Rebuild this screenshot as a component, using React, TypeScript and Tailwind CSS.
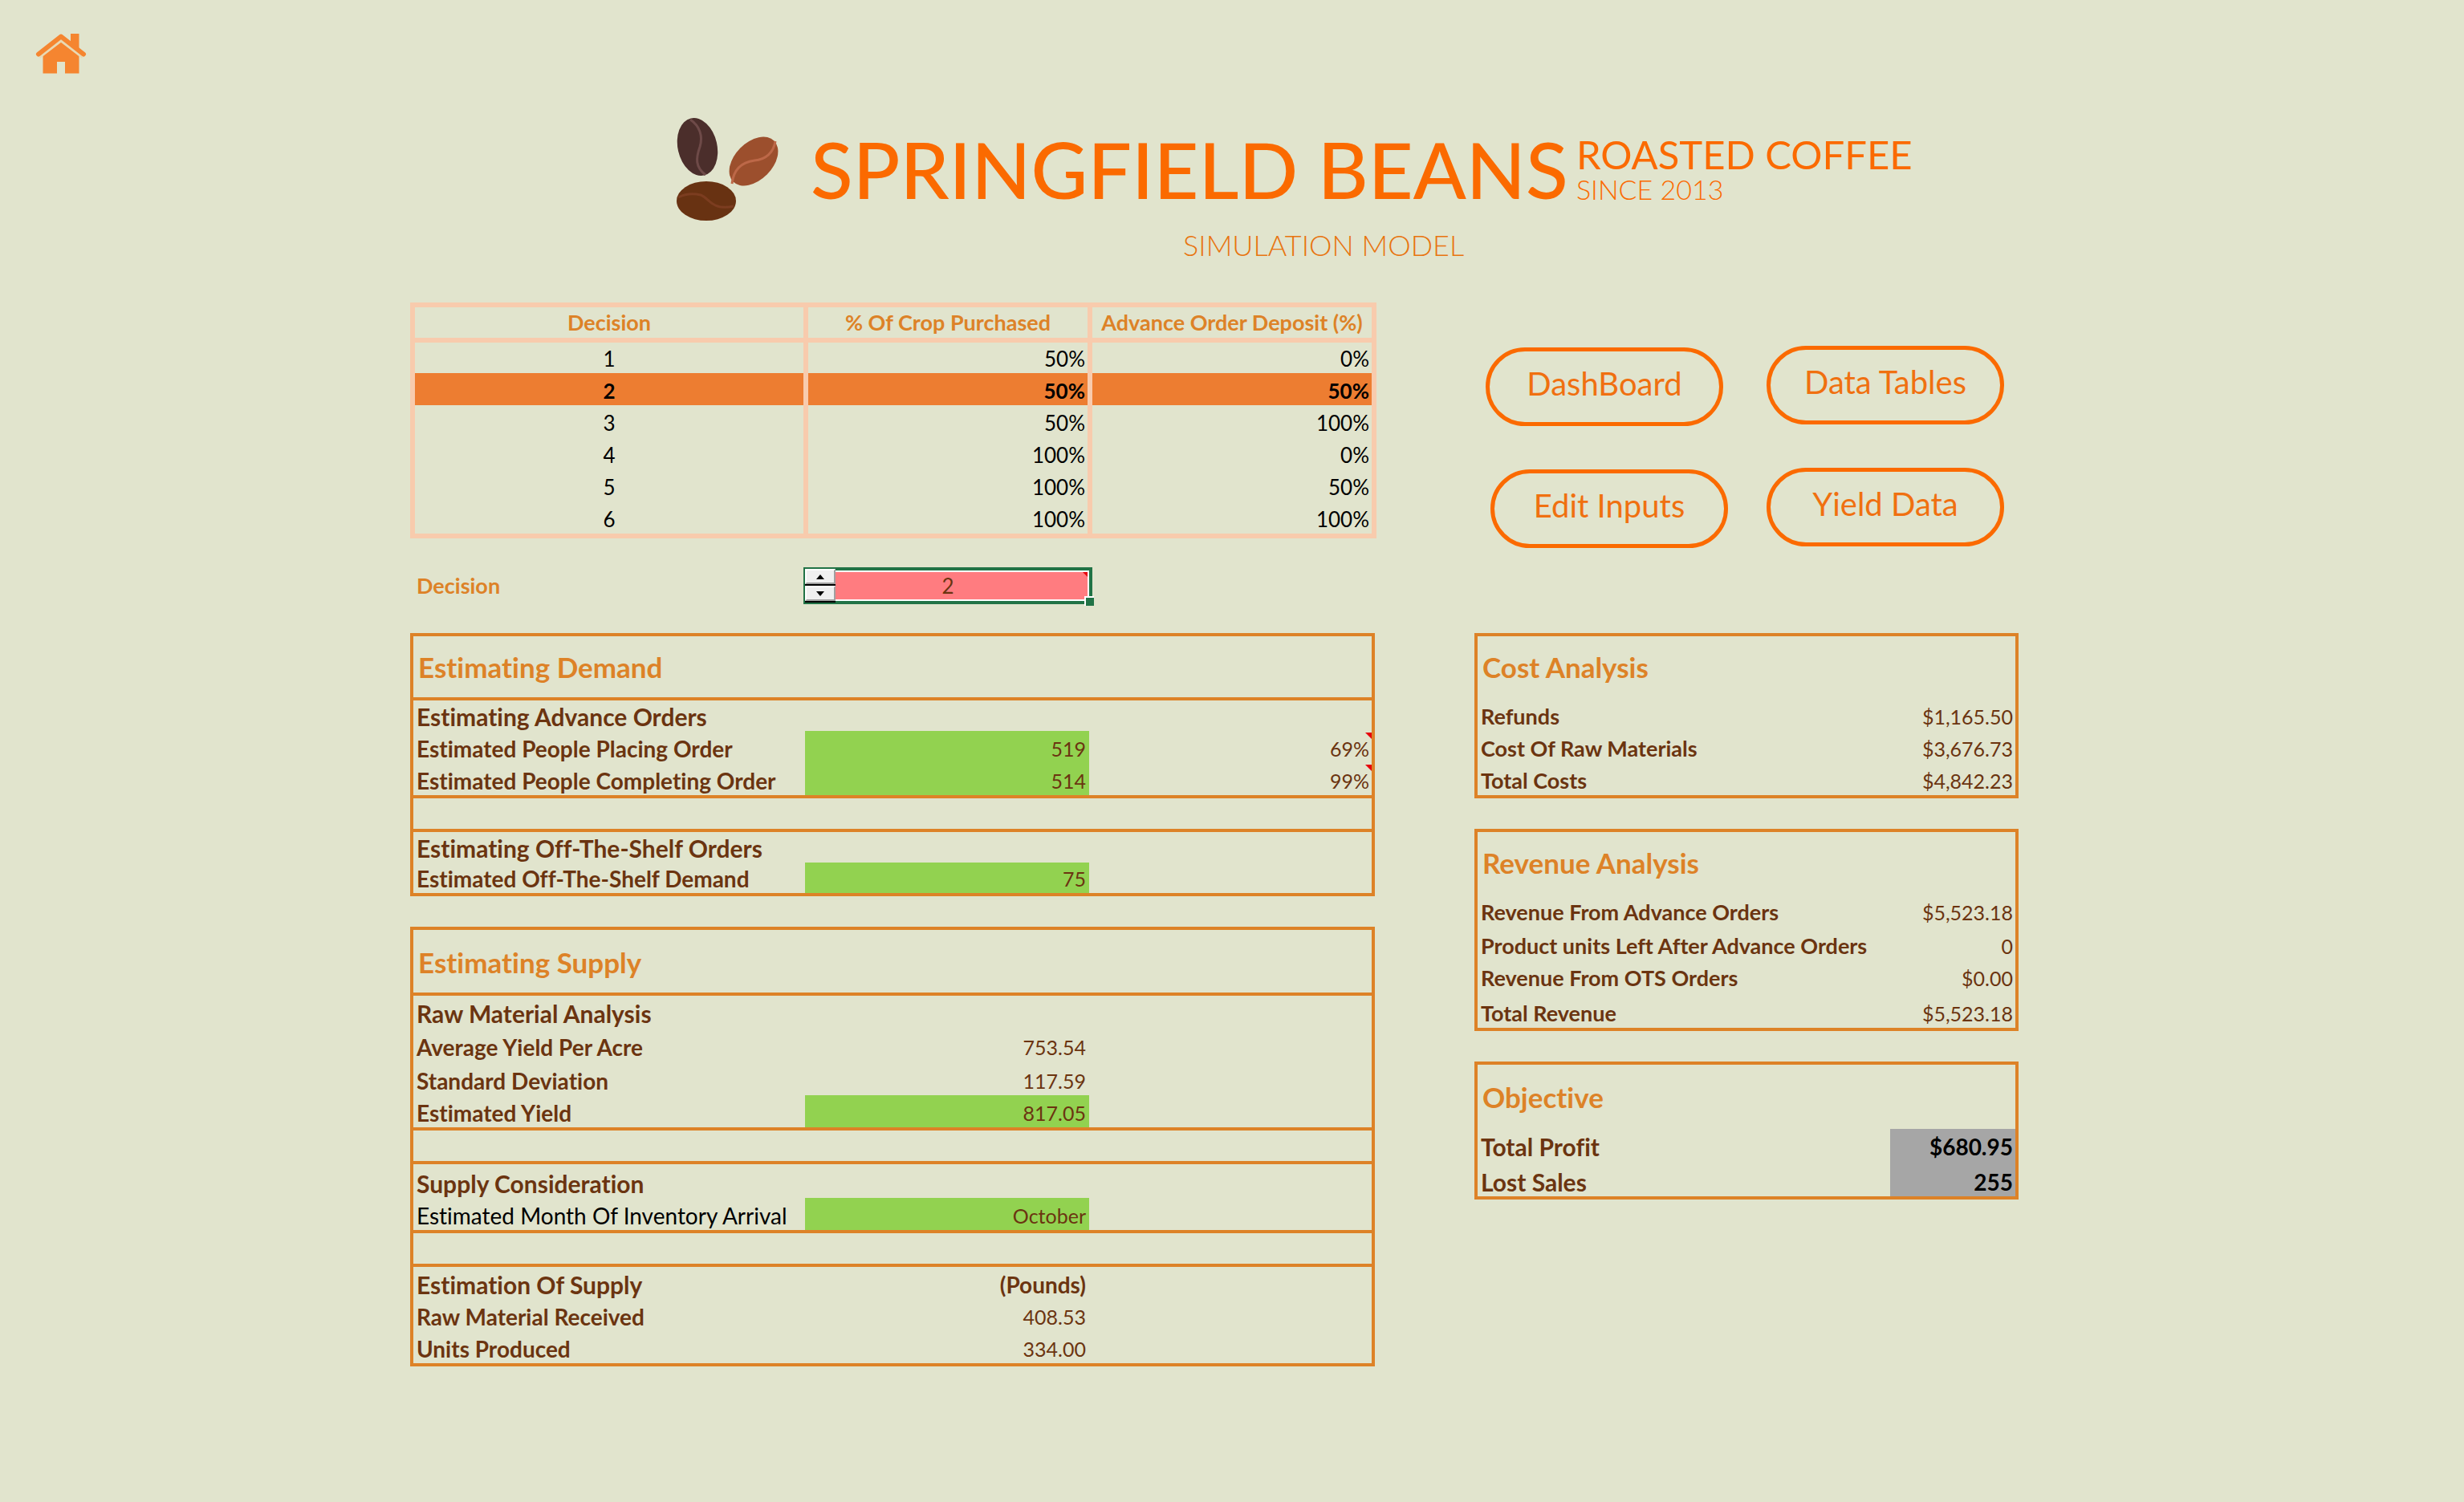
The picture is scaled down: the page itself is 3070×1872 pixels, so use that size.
import { useState } from "react";
import type { ReactNode } from "react";

const decisions = [
  { id: 1, crop: "50%", deposit: "0%" },
  { id: 2, crop: "50%", deposit: "50%" },
  { id: 3, crop: "50%", deposit: "100%" },
  { id: 4, crop: "100%", deposit: "0%" },
  { id: 5, crop: "100%", deposit: "50%" },
  { id: 6, crop: "100%", deposit: "100%" },
];

function HomeIcon() {
  return (
    <svg viewBox="44 41 64 52" className="h-[52px] w-[64px]" aria-hidden="true">
      <g fill="#f58530">
        <path d="M88 42h10.500v24l-10.500-8z" />
        <path d="M76 50.500 98.500 69v22.500H81V77H71v14.500H53.500V69z" />
      </g>
      <path d="M48 70 76 48.500 104 70" fill="none" stroke="#e8d9b4" strokeWidth="7" />
      <path d="M48 67.500 76 45.500 104 67.500" fill="none" stroke="#f58530" strokeWidth="6" strokeLinecap="round" strokeLinejoin="round" />
    </svg>
  );
}

function BeansLogo() {
  return (
    <svg viewBox="840 145 132 132" className="h-[132px] w-[132px] shrink-0" aria-hidden="true">
      <ellipse cx="869" cy="183" rx="24.500" ry="36.500" transform="rotate(-13 869 183)" fill="#4b2e2b" />
      <path d="M860 149C872 157 876 170 872 183C867 197 866 208 879 218" fill="none" stroke="#6e4a48" strokeWidth="3" />
      <ellipse cx="939" cy="201" rx="23.500" ry="36" transform="rotate(45 939 201)" fill="#9c4f2d" />
      <path d="M966 176C964 190 954 199 940 200C925 202 914 210 912 229" fill="none" stroke="#bd6848" strokeWidth="3" />
      <ellipse cx="880" cy="250.500" rx="37" ry="24.500" fill="#683212" />
      <path d="M845 246C853 242 864 241 873 243C884 247 887 263 914 257" fill="none" stroke="#7c3d20" strokeWidth="3" />
    </svg>
  );
}

function NavButton({ children, className }: { children: ReactNode; className: string }) {
  return (
    <button
      type="button"
      className={`h-[98px] w-[296px] rounded-full border-[5px] border-[#fb6a00] pb-2 text-[40px] leading-[48px] text-[#f07010] ${className}`}
    >
      {children}
    </button>
  );
}

type Row = {
  h: string;
  label?: string;
  kind?: "title" | "heading" | "plain" | "strong" | "item";
  value?: string;
  fill?: boolean;
  boldValue?: boolean;
  extra?: string;
  line?: boolean;
};

const kinds = {
  title: "text-[35px] leading-[40px] font-bold text-[#dd8227] pb-[18px] pl-[6px]",
  heading: "text-[30px] leading-[32px] font-bold text-[#6b3410] pb-[2px] pl-[4px]",
  strong: "text-[28px] leading-[32px] font-bold text-[#6b3410] pb-[2px] pl-[4px]",
  item: "text-[27px] leading-[32px] font-bold text-[#6b3410] pb-[2px] pl-[4px]",
  plain: "text-[28px] leading-[32px] text-black pb-[2px] pl-[4px]",
};

function Note() {
  return <span className="absolute top-[2px] right-0 h-2 w-2 bg-red-600 [clip-path:polygon(0_0,100%_0,100%_100%)]" />;
}

function EstimatePanel({ rows }: { rows: Row[] }) {
  return (
    <table className="w-full table-fixed border-separate border-spacing-0 border-4 border-[#dd8227]">
      <colgroup>
        <col />
        <col className="w-[354px]" />
        <col className="w-[352px]" />
      </colgroup>
      <tbody>
        {rows.map((r, i) => {
          const line = r.line ? "border-b-4 border-[#dd8227]" : "";
          return (
            <tr key={i} className={r.h}>
              <th scope="row" className={`p-0 text-left align-bottom whitespace-nowrap ${line} ${kinds[r.kind ?? "strong"]} ${r.kind === "plain" ? "font-normal" : ""}`}>
                {r.label}
              </th>
              <td
                className={`p-0 pr-[4px] pb-[2px] text-right align-bottom leading-[32px] text-[#6b3410] ${line} ${r.fill ? "bg-[#92d250] bg-clip-padding" : ""} ${r.boldValue ? "text-[28px] font-bold" : "text-[25px]"}`}
              >
                {r.value}
              </td>
              <td className={`relative p-0 pr-[3px] pb-[2px] text-right align-bottom text-[25px] leading-[32px] text-[#6b3410] ${line}`}>
                {r.extra}
                {r.extra && <Note />}
              </td>
            </tr>
          );
        })}
      </tbody>
    </table>
  );
}

function SummaryPanel({ title, titleHeight, rows, highlight }: { title: string; titleHeight: string; rows: Row[]; highlight?: boolean }) {
  return (
    <table className="w-full table-fixed border-separate border-spacing-0 border-4 border-[#dd8227]">
      <colgroup>
        <col />
        <col className="w-[156px]" />
      </colgroup>
      <thead>
        <tr className={titleHeight}>
          <th colSpan={2} className="pb-[20px] pl-[6px] text-left align-bottom text-[35px] leading-[40px] font-bold text-[#dd8227]">
            {title}
          </th>
        </tr>
      </thead>
      <tbody>
        {rows.map((r) => (
          <tr key={r.label} className={r.h}>
            <th scope="row" className={`text-left align-bottom whitespace-nowrap ${kinds[r.kind ?? "item"]}`}>
              {r.label}
            </th>
            <td
              className={`pr-[3px] pb-[2px] text-right align-bottom leading-[32px] ${highlight ? "bg-[#a6a6a6] text-[28px] font-bold text-black" : "text-[25px] text-[#6b3410]"}`}
            >
              {r.value}
            </td>
          </tr>
        ))}
      </tbody>
    </table>
  );
}

const demand: Row[] = [
  { h: "h-[80px]", label: "Estimating Demand", kind: "title", line: true },
  { h: "h-[38px]", label: "Estimating Advance Orders", kind: "heading" },
  { h: "h-[40px]", label: "Estimated People Placing Order", value: "519", fill: true, extra: "69%" },
  { h: "h-[44px]", label: "Estimated People Completing Order", value: "514", fill: true, extra: "99%", line: true },
  { h: "h-[42px]", line: true },
  { h: "h-[38px]", label: "Estimating Off-The-Shelf Orders", kind: "heading" },
  { h: "h-[38px]", label: "Estimated Off-The-Shelf Demand", value: "75", fill: true },
];

const supply: Row[] = [
  { h: "h-[82px]", label: "Estimating Supply", kind: "title", line: true },
  { h: "h-[40px]", label: "Raw Material Analysis", kind: "heading" },
  { h: "h-[42px]", label: "Average Yield Per Acre", value: "753.54" },
  { h: "h-[42px]", label: "Standard Deviation", value: "117.59" },
  { h: "h-[44px]", label: "Estimated Yield", value: "817.05", fill: true, line: true },
  { h: "h-[42px]", line: true },
  { h: "h-[42px]", label: "Supply Consideration", kind: "heading" },
  { h: "h-[44px]", label: "Estimated Month Of Inventory Arrival", kind: "plain", value: "October", fill: true, line: true },
  { h: "h-[42px]", line: true },
  { h: "h-[40px]", label: "Estimation Of Supply", kind: "heading", value: "(Pounds)", boldValue: true },
  { h: "h-[40px]", label: "Raw Material Received", value: "408.53" },
  { h: "h-[40px]", label: "Units Produced", value: "334.00" },
];

const costs: Row[] = [
  { h: "h-[40px]", label: "Refunds", value: "$1,165.50" },
  { h: "h-[40px]", label: "Cost Of Raw Materials", value: "$3,676.73" },
  { h: "h-[40px]", label: "Total Costs", value: "$4,842.23" },
];

const revenue: Row[] = [
  { h: "h-[40px]", label: "Revenue From Advance Orders", value: "$5,523.18" },
  { h: "h-[42px]", label: "Product units Left After Advance Orders", value: "0" },
  { h: "h-[40px]", label: "Revenue From OTS Orders", value: "$0.00" },
  { h: "h-[44px]", label: "Total Revenue", value: "$5,523.18" },
];

const objective: Row[] = [
  { h: "h-[40px]", label: "Total Profit", kind: "heading", value: "$680.95" },
  { h: "h-[44px]", label: "Lost Sales", kind: "heading", value: "255" },
];

const spin =
  "flex h-[21px] w-[38px] items-center justify-center border-2 border-t-white border-l-white border-r-[#a0a0a0] border-b-[#a0a0a0] bg-[#f0f0f0]";

export default function App() {
  const [selected, setSelected] = useState(2);
  const step = (d: number) => setSelected((s) => Math.min(6, Math.max(1, s + d)));

  return (
    <div className="min-h-screen bg-[#e1e4cd] pb-16 font-[Lato,Carlito,sans-serif] [font-variant-ligatures:none]">
      <nav className="pt-[41px] pl-[44px]">
        <a href="#home" aria-label="Home" className="inline-block align-top">
          <HomeIcon />
        </a>
      </nav>

      <header className="pt-[52px] text-[#fb6a00]">
        <div className="grid grid-cols-[840fr_2230fr]">
          <div className="col-start-2 flex items-start whitespace-nowrap">
            <BeansLogo />
            <h1 className="mt-[6px] ml-[38px] text-[97px] leading-[120px] font-medium">SPRINGFIELD BEANS</h1>
            <div className="mt-[22px] ml-[10px]">
              <p className="text-[49px] leading-[50px]">ROASTED COFFEE</p>
              <p className="text-[34px] leading-[38px] font-light">SINCE 2013</p>
            </div>
          </div>
        </div>
        <div className="mt-[8px] grid grid-cols-[1474fr_1596fr]">
          <p className="col-start-2 text-[36px] leading-[40px] font-light whitespace-nowrap text-[#e8740f]">SIMULATION MODEL</p>
        </div>
      </header>

      <main className="mt-[52px] grid grid-cols-[511fr_1204fr_122fr_678fr_555fr] gap-y-[36px]">
        <section className="col-start-2">
          <table className="w-full table-fixed border-separate border-spacing-0 border-[6px] border-[#f8cbad] text-[26px] leading-[32px]">
            <colgroup>
              <col />
              <col className="w-[354px]" />
              <col className="w-[348px]" />
            </colgroup>
            <thead>
              <tr className="h-[44px] text-[27px] text-[#dd8227]">
                <th className="border-r-[6px] border-b-[6px] border-[#f8cbad] p-0">Decision</th>
                <th className="border-r-[6px] border-b-[6px] border-[#f8cbad] p-0">% Of Crop Purchased</th>
                <th className="border-b-[6px] border-[#f8cbad] p-0 whitespace-nowrap">Advance Order Deposit (%)</th>
              </tr>
            </thead>
            <tbody>
              {decisions.map((d, i) => (
                <tr key={d.id} className={`${i === 0 ? "h-[38px]" : "h-[40px]"} ${d.id === selected ? "bg-[#ed7d31] font-bold" : ""}`}>
                  <td className="border-r-[6px] border-[#f8cbad] p-0 pb-[2px] text-center align-bottom">{d.id}</td>
                  <td className="border-r-[6px] border-[#f8cbad] p-0 pr-[3px] pb-[2px] text-right align-bottom">{d.crop}</td>
                  <td className="p-0 pr-[3px] pb-[2px] text-right align-bottom">{d.deposit}</td>
                </tr>
              ))}
            </tbody>
          </table>

          <div className="mt-[36px] flex items-center pr-[354px]">
            <label htmlFor="decision" className="flex-1 pl-[8px] text-[27px] leading-[32px] font-bold text-[#dd8227]">
              Decision
            </label>
            <div className="relative h-[46px] w-[360px] border-4 border-[#217346]">
              <input
                id="decision"
                value={selected}
                readOnly
                className="block h-full w-full border-2 border-white bg-[#ff7c80] text-center text-[26px] leading-[32px] text-[#6b3410] outline-none"
              />
              <span className="absolute top-[2px] right-[2px] h-[6px] w-[6px] bg-red-600 [clip-path:polygon(0_0,100%_0,100%_100%)]" />
              <span className="absolute -right-[6px] -bottom-[6px] h-3 w-3 border-t-2 border-l-2 border-white bg-[#217346]" />
              <div className="absolute -top-[2px] -left-[2px] flex h-[42px] w-[38px] flex-col gap-[2px] border-r-2 border-b-2 border-black bg-black">
                <button type="button" aria-label="Increase decision" onClick={() => step(1)} className={spin}>
                  <svg viewBox="0 0 10 6" className="h-[6px] w-[10px]"><path d="M5 0 10 6H0z" /></svg>
                </button>
                <button type="button" aria-label="Decrease decision" onClick={() => step(-1)} className={spin}>
                  <svg viewBox="0 0 10 6" className="h-[6px] w-[10px]"><path d="M5 6 10 0H0z" /></svg>
                </button>
              </div>
            </div>
          </div>
        </section>

        <nav className="col-start-4 flex flex-col gap-[52px] pt-[54px]">
          <div className="flex justify-between pr-[18px] pl-[14px]">
            <NavButton className="mt-[2px]">DashBoard</NavButton>
            <NavButton className="mb-[2px]">Data Tables</NavButton>
          </div>
          <div className="flex justify-between pr-[18px] pl-[20px]">
            <NavButton className="mt-[2px]">Edit Inputs</NavButton>
            <NavButton className="mb-[2px]">Yield Data</NavButton>
          </div>
        </nav>

        <section className="col-start-2 flex flex-col gap-[38px] pr-[2px]">
          <EstimatePanel rows={demand} />
          <EstimatePanel rows={supply} />
        </section>

        <section className="col-start-4 flex flex-col gap-[38px]">
          <SummaryPanel title="Cost Analysis" titleHeight="h-[78px]" rows={costs} />
          <SummaryPanel title="Revenue Analysis" titleHeight="h-[78px]" rows={revenue} />
          <SummaryPanel title="Objective" titleHeight="h-[80px]" rows={objective} highlight />
        </section>
      </main>
    </div>
  );
}
